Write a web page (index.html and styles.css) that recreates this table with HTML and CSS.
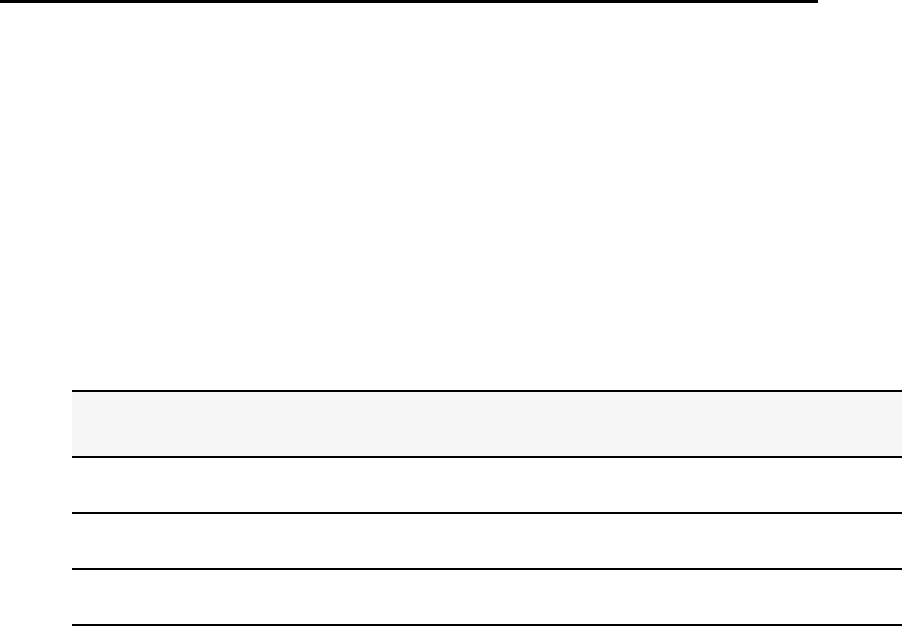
FILE: index.html
```html
<!DOCTYPE html>
<html lang="en">
<head>
    <meta charset="UTF-8">
    <meta name="viewport" content="width=device-width, initial-scale=1.0">
    <title>Table</title>
    <link rel="stylesheet" href="styles.css">
</head>
<body>
    <div class="top-bar"></div>

    <div class="table-wrap">
        <table class="data-table">
            <thead>
                <tr class="head-row"><th></th></tr>
            </thead>
            <tbody>
                <tr class="body-row"><td></td></tr>
                <tr class="body-row"><td></td></tr>
                <tr class="body-row"><td></td></tr>
            </tbody>
        </table>
    </div>
</body>
</html>
```

FILE: styles.css
```css
body {
    font-family: "Liberation Sans", Arial, sans-serif;
    margin: 0;
    background-color: #fff;
    overflow: hidden;
}
.top-bar {
    width: 818px;
    height: 3px;
    background-color: #000;
}
.table-wrap {
    padding-top: 387px;
    padding-left: 72px;
}
.data-table {
    width: 830px;
    border-collapse: collapse;
}
.data-table th,
.data-table td {
    padding: 0;
}
.head-row {
    background-color: #f6f6f6; /* cabecalho cinza claro */
    border-top: 2px solid #000;
    border-bottom: 2px solid #000;
}
.head-row th {
    height: 64px;
}
.body-row {
    border-bottom: 2px solid #000;
}
.body-row td {
    height: 54px;
}
```
